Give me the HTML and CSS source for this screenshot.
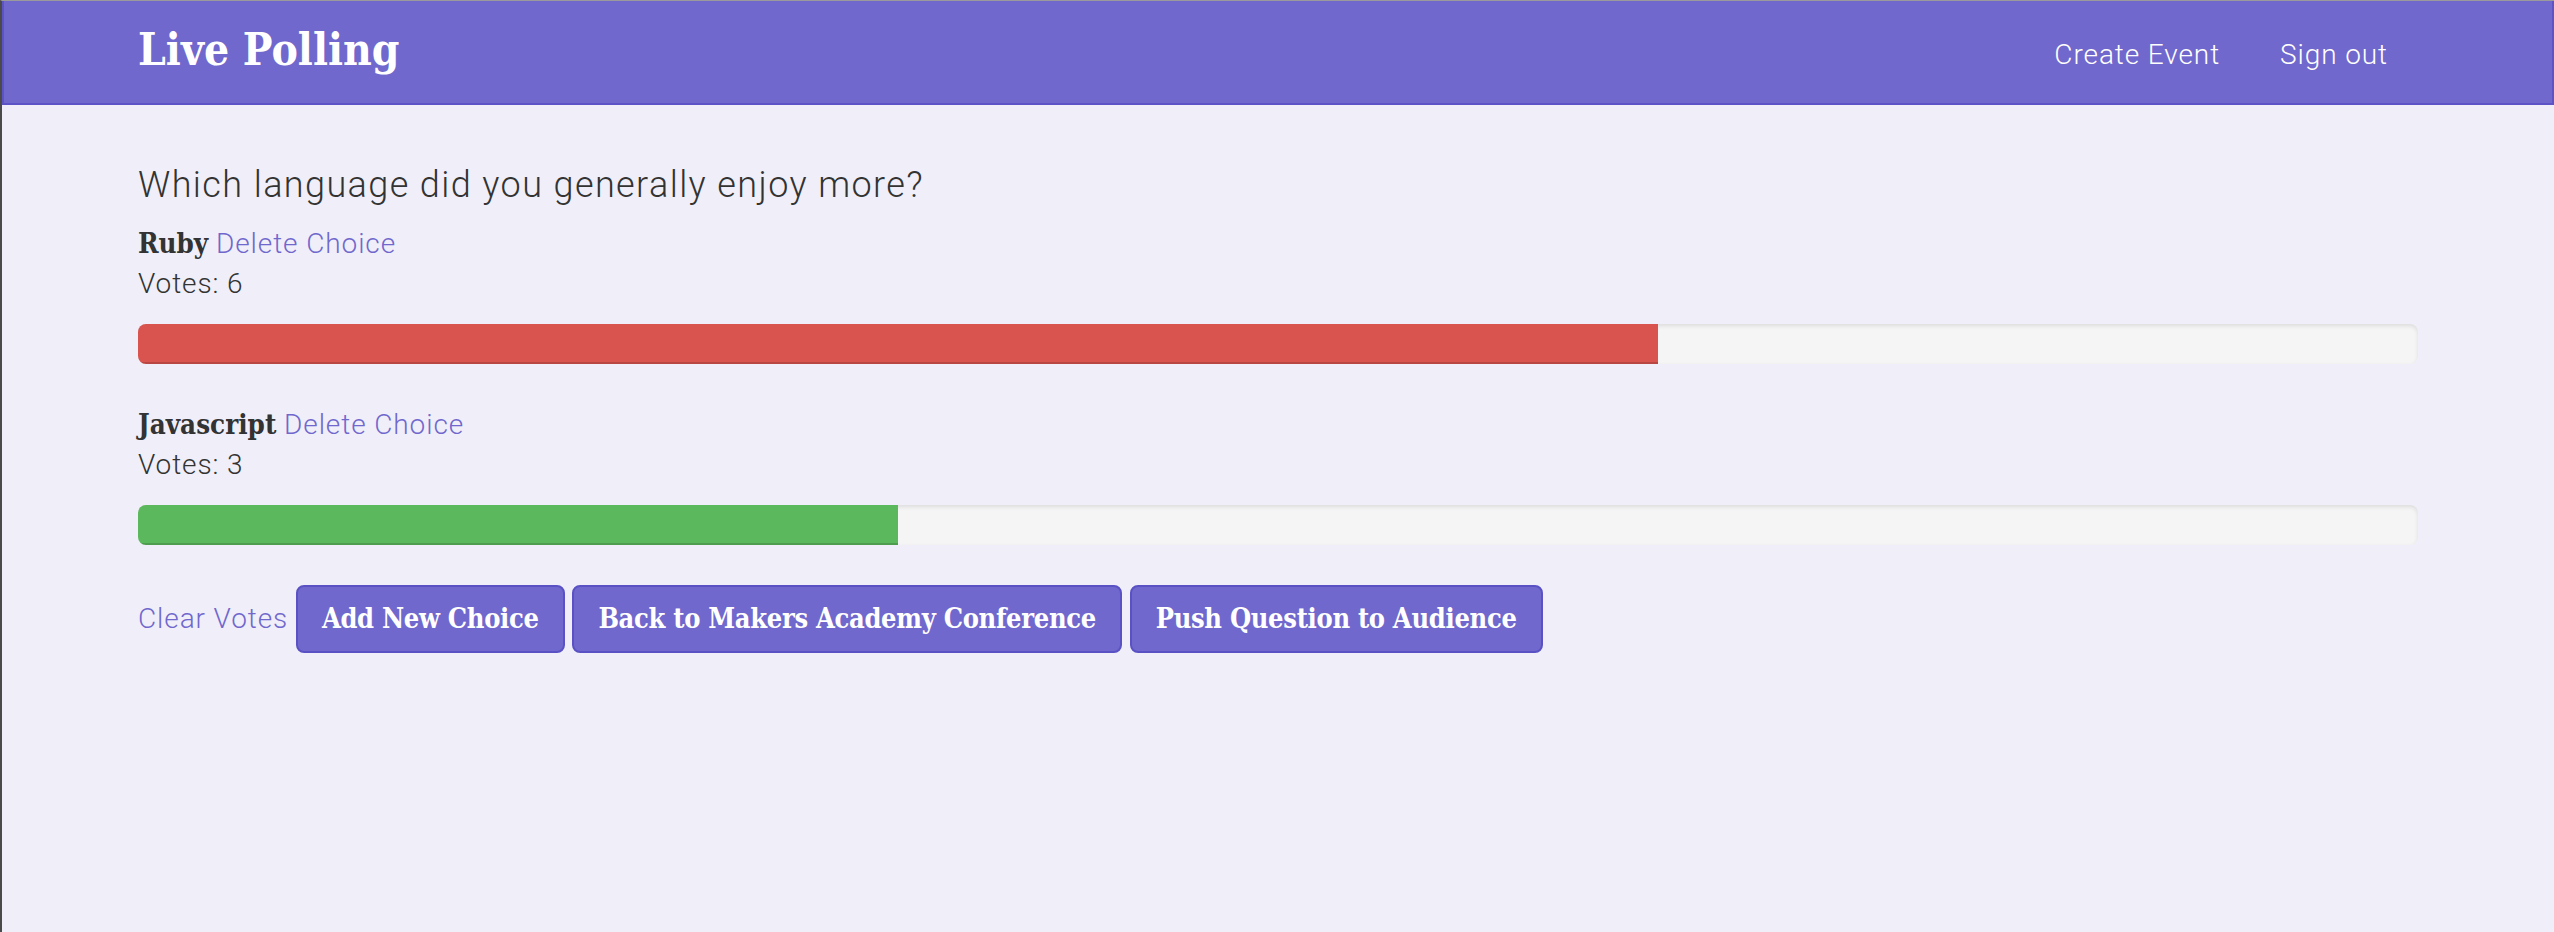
FILE: index.html
```html
<!DOCTYPE html>
<html lang="en">
<head>
<meta charset="utf-8">
<title>Live Polling</title>
<link rel="stylesheet" href="styles.css">
</head>
<body>
<div class="frame">
  <nav class="navbar">
    <div class="nav-inner">
      <a class="brand" href="#">Live Polling</a>
      <ul class="nav-links">
        <li><a href="#">Create Event</a></li>
        <li><a href="#">Sign out</a></li>
      </ul>
    </div>
  </nav>
  <main class="container">
    <h3 class="question">Which language did you generally enjoy more?</h3>

    <section class="choice">
      <div class="choice-line"><strong class="choice-name">Ruby</strong> <a class="link" href="#">Delete Choice</a></div>
      <div class="votes">Votes: 6</div>
      <div class="progress"><div class="bar bar-red" style="width: 66.667%"></div></div>
    </section>

    <section class="choice">
      <div class="choice-line"><strong class="choice-name">Javascript</strong> <a class="link" href="#">Delete Choice</a></div>
      <div class="votes">Votes: 3</div>
      <div class="progress"><div class="bar bar-green" style="width: 33.333%"></div></div>
    </section>

    <div class="actions">
      <a class="link" href="#">Clear Votes</a>
      <a class="btn" href="#">Add New Choice</a>
      <a class="btn" href="#">Back to Makers Academy Conference</a>
      <a class="btn" href="#">Push Question to Audience</a>
    </div>
  </main>
</div>
</body>
</html>
```
FILE: styles.css
```css
html, body {
  margin: 0;
  padding: 0;
  background: #f0eff9;
}

body {
  font-family: Roboto, "Noto Sans", sans-serif;
  font-weight: 300;
  font-size: 28px;
  line-height: 40px;
  letter-spacing: 0.9px;
  color: #333333;
}

.frame {
  min-height: 100vh;
  box-sizing: border-box;
  border-top: 1px solid #9a9a9a;
  border-left: 2px solid #4a4a4a;
}

a {
  text-decoration: none;
}

.navbar {
  background: #7068cd;
  border: 2px solid #5b53c6;
  border-top: 0;
  height: 102px;
}

.nav-inner {
  width: 2280px;
  margin: 0 auto;
  padding: 0 30px;
  display: flex;
  justify-content: space-between;
  align-items: flex-start;
  box-sizing: content-box;
}

.brand {
  font-family: "DejaVu Serif", serif;
  font-stretch: condensed;
  font-weight: 700;
  font-size: 44px;
  line-height: 50px;
  letter-spacing: 0;
  color: #ffffff;
  padding-top: 24px;
}

.nav-links {
  list-style: none;
  margin: 0;
  padding: 0;
  display: flex;
}

.nav-links a {
  display: block;
  padding: 34px 30px 28px;
  color: #ffffff;
  line-height: 40px;
}

.container {
  width: 2280px;
  margin: 0 auto;
  padding: 60px 30px 0;
  box-sizing: content-box;
}

.question {
  margin: 0 0 18px;
  font-size: 36px;
  line-height: 40px;
  font-weight: 300;
  letter-spacing: 1.4px;
}

.choice-line {
  line-height: 40px;
}

.choice-name {
  font-family: "DejaVu Serif", serif;
  font-stretch: condensed;
  font-weight: 700;
  font-size: 27.5px;
  letter-spacing: 0;
}

.link {
  color: #7068cd;
}

.votes {
  margin-bottom: 20px;
}

.progress {
  height: 40px;
  background: #f5f5f5;
  border-radius: 8px;
  box-shadow: inset 0 2px 4px rgba(0, 0, 0, 0.1);
  overflow: hidden;
  margin-bottom: 40px;
}

.bar {
  height: 100%;
  box-shadow: inset 0 -2px 0 rgba(0, 0, 0, 0.15);
}

.bar-red {
  background: #d9534f;
}

.bar-green {
  background: #5cb85c;
}

.actions .btn {
  display: inline-block;
  padding: 12px 24px;
  border: 2px solid #5a52c4;
  border-radius: 8px;
  background: #7068cd;
  color: #ffffff;
  font-family: "DejaVu Serif", serif;
  font-stretch: condensed;
  font-weight: 700;
  font-size: 27px;
  line-height: 40px;
  letter-spacing: -0.3px;
}
```
